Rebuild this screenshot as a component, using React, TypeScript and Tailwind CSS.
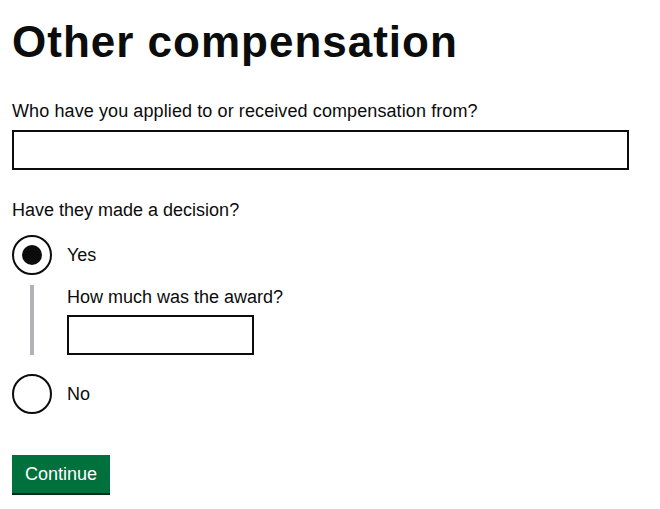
export default function App() {
  return (
    <div
      className="min-h-[509px] bg-white pl-[12px] pr-[31px] pt-[17px] text-[#0b0c0c]"
      style={{ fontFamily: '"Liberation Sans", Arial, sans-serif' }}
    >
      <h1 className="m-0 text-[44px] font-bold leading-[50px] tracking-[1px]">Other compensation</h1>

      <div className="mt-[32px]">
        <label className="block text-[18px] leading-[25px] mb-[6px] tracking-[0.1px]">
          Who have you applied to or received compensation from?
        </label>
        <input
          type="text"
          className="block h-[40px] w-full border-2 border-[#0b0c0c] bg-white px-[5px] text-[18px] outline-none"
        />
      </div>

      <fieldset className="mt-[28px]">
        <legend className="text-[18px] leading-[25px]">Have they made a decision?</legend>

        <div className="mt-[12px] flex items-center gap-[15px]">
          <span className="flex h-[40px] w-[40px] items-center justify-center rounded-full border-2 border-[#0b0c0c]">
            <span className="h-[20px] w-[20px] rounded-full bg-[#0b0c0c]" />
          </span>
          <span className="text-[18px] leading-[25px]">Yes</span>
        </div>

        <div className="mt-[10px] ml-[18px] border-l-4 border-[#b1b4b6] pl-[33px]">
          <label className="block text-[18px] leading-[25px] mb-[5px]">How much was the award?</label>
          <input
            type="text"
            className="block h-[40px] w-[187px] border-2 border-[#0b0c0c] bg-white px-[5px] text-[18px] outline-none"
          />
        </div>

        <div className="mt-[19px] flex items-center gap-[15px]">
          <span className="h-[40px] w-[40px] rounded-full border-2 border-[#0b0c0c]" />
          <span className="text-[18px] leading-[25px]">No</span>
        </div>
      </fieldset>

      <button
        type="button"
        className="mt-[41px] h-[38px] bg-[#00703c] px-[13px] text-[18px] leading-[25px] text-white shadow-[0_2px_0_#002d18]"
      >
        Continue
      </button>
    </div>
  );
}
